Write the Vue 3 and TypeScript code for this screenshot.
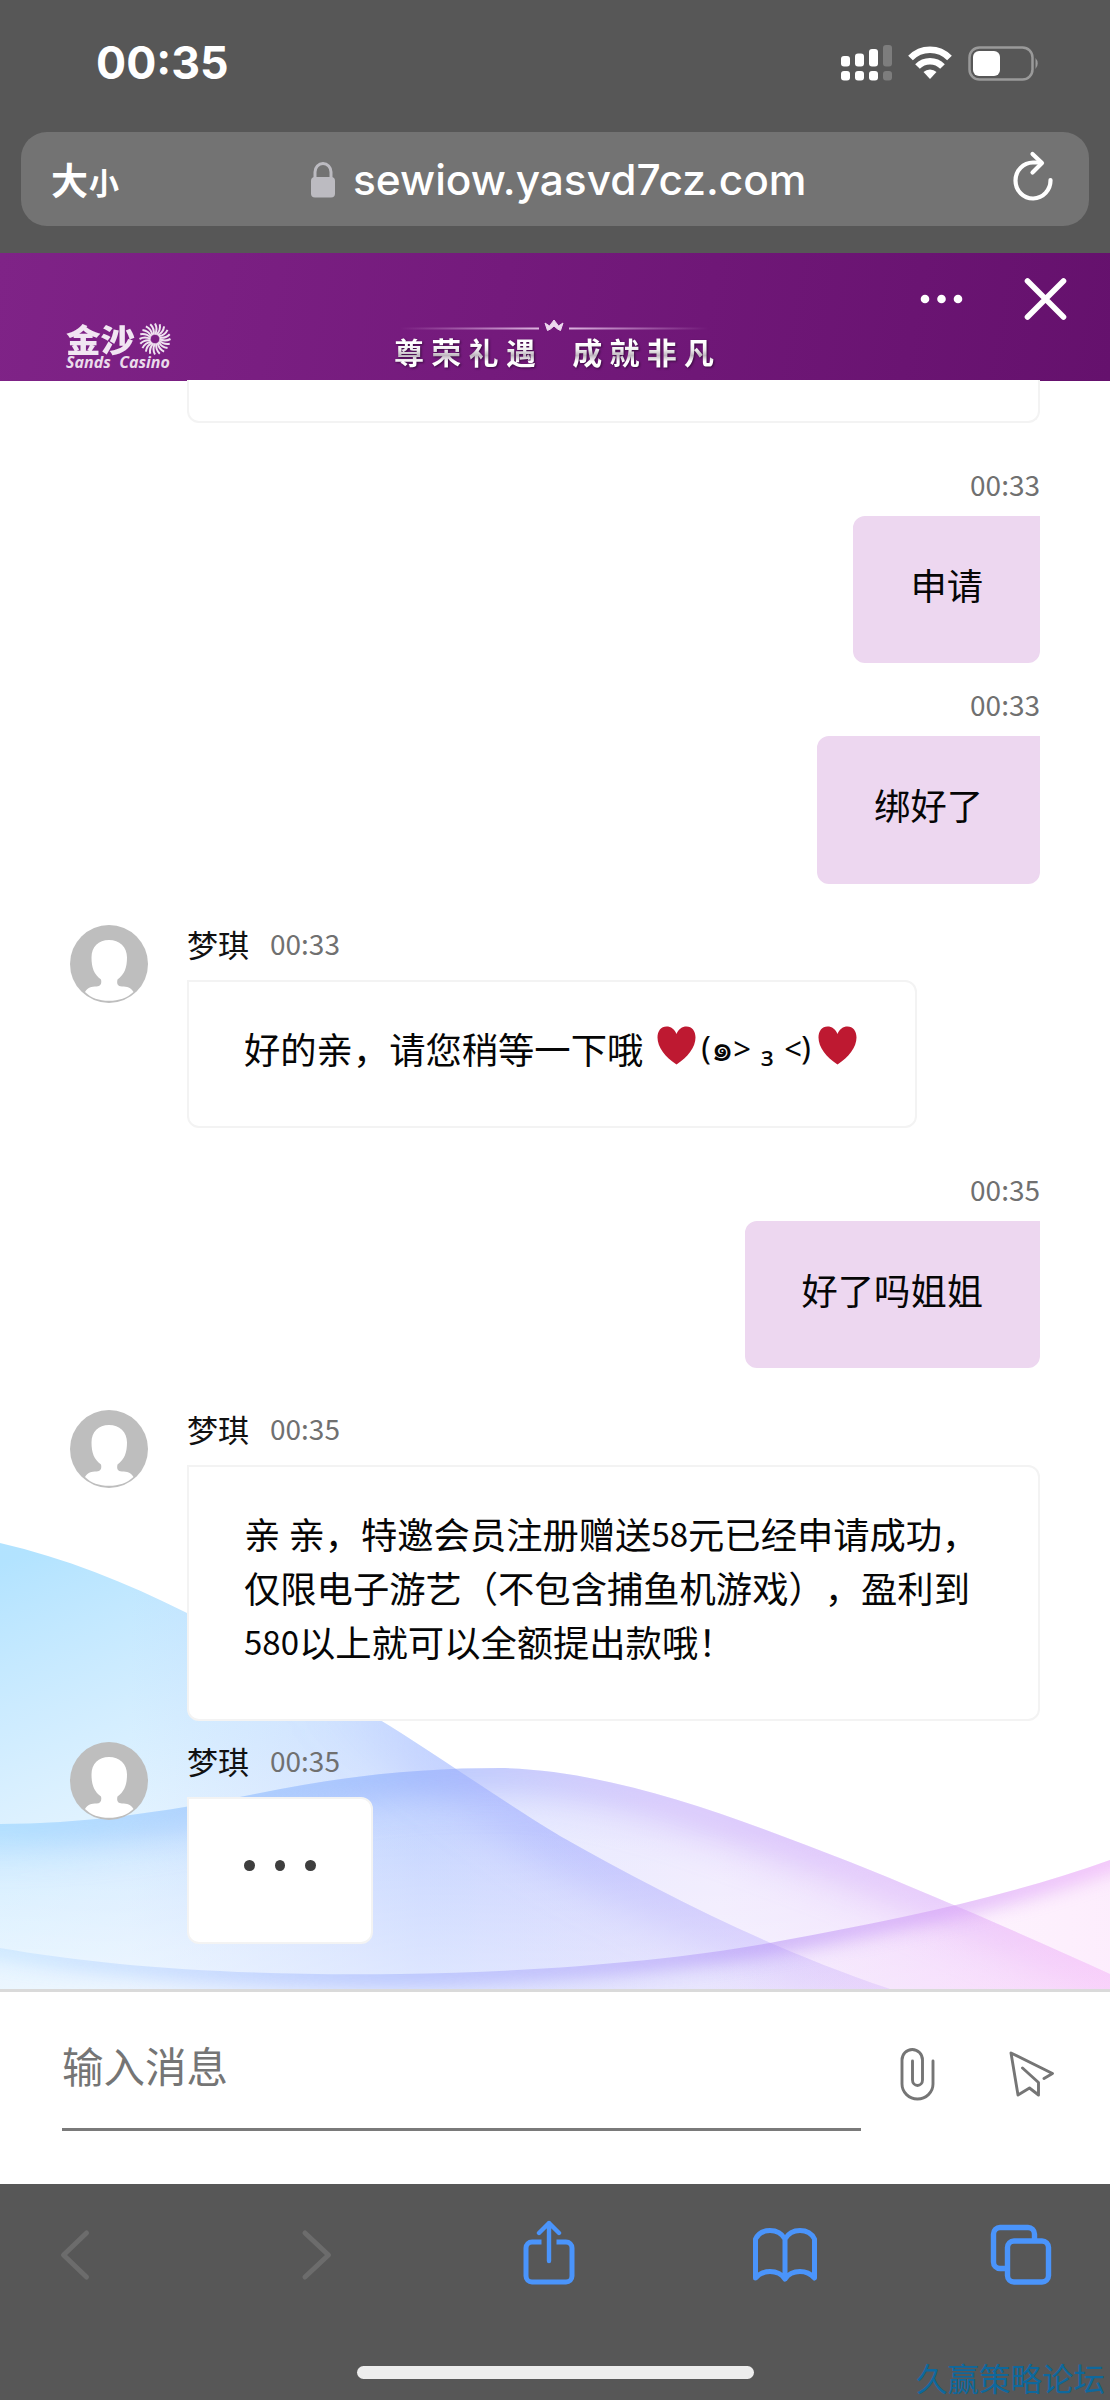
<script setup lang="ts">
interface Part {
  kind: 'text' | 'num' | 'heart' | 'face'
  value?: string
}

interface Message {
  from: 'me' | 'agent'
  time: string
  lines: Part[][]
  typing?: boolean
}

const agentName = '梦琪'

const t = (value: string): Part => ({ kind: 'text', value })
const n = (value: string): Part => ({ kind: 'num', value })

const messages: Message[] = [
  { from: 'me', time: '00:33', lines: [[t('申请')]] },
  { from: 'me', time: '00:33', lines: [[t('绑好了')]] },
  {
    from: 'agent',
    time: '00:33',
    lines: [[t('好的亲，请您稍等一下哦'), { kind: 'heart' }, { kind: 'face' }, { kind: 'heart' }]],
  },
  { from: 'me', time: '00:35', lines: [[t('好了吗姐姐')]] },
  {
    from: 'agent',
    time: '00:35',
    lines: [
      [t('亲 亲，特邀会员注册赠送'), n('58'), t('元已经申请成功，')],
      [t('仅限电子游艺（不包含捕鱼机游戏），盈利到')],
      [n('580'), t('以上就可以全额提出款哦！')],
    ],
  },
  { from: 'agent', time: '00:35', lines: [], typing: true },
]

const petals = Array.from({ length: 20 }, (_, i) => i * 18)
</script>

<template>
  <div class="phone">
    <header class="status">
      <span class="clock">00:35</span>
      <svg class="status-icons" width="200" height="40" viewBox="0 0 200 40">
        <g fill="#fff">
          <rect x="1" y="14" width="9" height="10.500" rx="3" />
          <rect x="15" y="11.500" width="9" height="13" rx="3" />
          <rect x="29" y="7" width="9" height="17.500" rx="3" />
          <rect x="1" y="29" width="9" height="9.500" rx="3" />
          <rect x="15" y="29" width="9" height="9.500" rx="3" />
          <rect x="29" y="29" width="9" height="9.500" rx="3" />
        </g>
        <g fill="#7d7d7d">
          <rect x="43" y="3" width="9" height="21.500" rx="3" />
          <rect x="43" y="29" width="9" height="9.500" rx="3" />
        </g>
        <g fill="none" stroke="#fff" stroke-width="6.500">
          <path d="M70.500 16a27 27 0 0 1 39 0" />
          <path d="M77.500 24.500a17.500 17.500 0 0 1 25 0" />
        </g>
        <path d="M90 37l-6.500-7a9.500 9.500 0 0 1 13 0z" fill="#fff" />
        <rect x="129.500" y="5.500" width="63" height="32" rx="10" fill="none" stroke="#9a9a9a" stroke-width="2.500" />
        <rect x="133" y="9" width="27" height="25" rx="6" fill="#fff" />
        <path d="M195.500 16a8 8 0 0 1 0 11z" fill="#9a9a9a" />
      </svg>
    </header>

    <div class="address">
      <div class="size"><span class="big">大</span><span class="small">小</span></div>
      <svg class="lock" width="26" height="38" viewBox="0 0 26 38">
        <rect x="1" y="16" width="24" height="20.500" rx="4" fill="#bcbbc1" />
        <path d="M5 18V11a8 8.500 0 0 1 16 0v7" fill="none" stroke="#bcbbc1" stroke-width="3" />
      </svg>
      <span class="url">sewiow.yasvd7cz.com</span>
      <svg class="reload" width="44" height="50" viewBox="0 0 44 50" fill="none" stroke="#fff" stroke-width="4.200" stroke-linecap="round" stroke-linejoin="round">
        <path d="M39.500 29A17.500 18 0 1 1 22 11.500h8" />
        <path d="M21.500 3L31 12l-9.500 9.500" />
      </svg>
    </div>

    <div class="banner">
      <div class="logo">
        <div class="logo-top">
          <span class="logo-cn">金沙</span>
          <svg width="32" height="34" viewBox="-16 -17 32 34" fill="none" stroke="#efe3f0" stroke-width="2">
            <path v-for="a in petals" :key="a" d="M0-4.500Q3-10 0-15.500" :transform="`rotate(${a})`" />
          </svg>
        </div>
        <span class="logo-en"><span class="logo-sands">Sands</span> Casino</span>
      </div>
      <div class="slogan">
        <svg width="324" height="20" viewBox="0 0 324 20">
          <defs>
            <linearGradient id="rule-l"><stop stop-color="#d9a5dd" stop-opacity="0" /><stop offset="1" stop-color="#dcb4df" /></linearGradient>
            <linearGradient id="rule-r"><stop stop-color="#dcb4df" /><stop offset="1" stop-color="#d9a5dd" stop-opacity="0" /></linearGradient>
          </defs>
          <rect x="6" y="12.500" width="139" height="2" fill="url(#rule-l)" />
          <rect x="175" y="12.500" width="139" height="2" fill="url(#rule-r)" />
          <path d="M153.500 15.500L151 8l4.500 3 4.500-6 4.500 6 4.500-3-2.500 7.500-3-1.500-3.500-3-3.500 3z" fill="#ecd9ee" stroke="#ecd9ee" stroke-width="1" stroke-linejoin="round" />
        </svg>
        <div class="slogan-text"><span>尊荣礼遇</span><span>成就非凡</span></div>
      </div>
      <svg class="actions" width="150" height="50" viewBox="0 0 150 50">
        <g fill="#fff"><circle cx="5" cy="24" r="4.300" /><circle cx="21.500" cy="24" r="4.300" /><circle cx="38" cy="24" r="4.300" /></g>
        <path d="M107.500 6l36 36m0-36l-36 36" stroke="#fff" stroke-width="5.600" stroke-linecap="round" />
      </svg>
    </div>

    <main class="chat">
      <svg class="waves" width="1110" height="489" viewBox="0 1500 1110 489" preserveAspectRatio="none">
        <defs>
          <linearGradient id="ga" gradientUnits="userSpaceOnUse" x1="60" y1="1540" x2="230" y2="1960">
            <stop stop-color="#9fdcff" stop-opacity=".8" /><stop offset=".35" stop-color="#b5e2ff" stop-opacity=".65" />
            <stop offset=".7" stop-color="#cdeaff" stop-opacity=".5" /><stop offset="1" stop-color="#e0efff" stop-opacity=".3" />
          </linearGradient>
          <linearGradient id="ga2" gradientUnits="userSpaceOnUse" x1="130" y1="0" x2="850" y2="0">
            <stop stop-color="#9fb4ff" stop-opacity="0" /><stop offset=".4" stop-color="#9fb0ff" stop-opacity=".32" />
            <stop offset="1" stop-color="#c4b0fb" stop-opacity=".35" />
          </linearGradient>
          <linearGradient id="gas" gradientUnits="userSpaceOnUse" x1="300" y1="0" x2="880" y2="0">
            <stop stop-color="#9fb4ff" stop-opacity="0" /><stop offset=".4" stop-color="#98a6ff" stop-opacity=".38" />
            <stop offset="1" stop-color="#c3a9fb" stop-opacity=".45" />
          </linearGradient>
          <linearGradient id="gb" gradientUnits="userSpaceOnUse" x1="0" y1="0" x2="1110" y2="0">
            <stop stop-color="#a9dcff" stop-opacity=".25" /><stop offset=".4" stop-color="#a3bcff" stop-opacity=".3" />
            <stop offset=".65" stop-color="#c9b4fb" stop-opacity=".28" /><stop offset="1" stop-color="#f0a2f8" stop-opacity=".5" />
          </linearGradient>
          <linearGradient id="gbs" gradientUnits="userSpaceOnUse" x1="0" y1="0" x2="1110" y2="0">
            <stop stop-color="#8fd0ff" /><stop offset=".35" stop-color="#84a5fb" />
            <stop offset=".6" stop-color="#bfa4fa" /><stop offset=".85" stop-color="#d4a6f8" /><stop offset="1" stop-color="#f3aef8" />
          </linearGradient>
          <linearGradient id="gcs" gradientUnits="userSpaceOnUse" x1="0" y1="0" x2="1110" y2="0">
            <stop stop-color="#a8d4ff" stop-opacity=".6" /><stop offset=".35" stop-color="#a3b2fd" />
            <stop offset=".7" stop-color="#b592f6" /><stop offset="1" stop-color="#eaa8f8" />
          </linearGradient>
          <linearGradient id="gfade" gradientUnits="userSpaceOnUse" x1="0" y1="1830" x2="0" y2="1989">
            <stop stop-color="#fff" stop-opacity="0" /><stop offset="1" stop-color="#fff" stop-opacity=".4" />
          </linearGradient>
          <linearGradient id="gpink" gradientUnits="userSpaceOnUse" x1="700" y1="0" x2="1110" y2="0">
            <stop stop-color="#f6b8f6" stop-opacity="0" /><stop offset="1" stop-color="#f6b8f6" stop-opacity=".25" />
          </linearGradient>
          <clipPath id="ca"><path d="M0 1543C65 1558 125 1582 187 1613C260 1648 320 1686 380 1720C430 1750 500 1800 560 1836C660 1892 760 1945 890 1989H0z" /></clipPath>
          <clipPath id="cb"><path d="M0 1824C80 1824 160 1813 255 1794C350 1774 430 1768 500 1768C610 1770 730 1815 850 1862C930 1894 1020 1933 1110 1974V1989H0z" /></clipPath>
          <clipPath id="cc"><path d="M0 1948C110 1967 240 1976 400 1974C540 1972 680 1960 780 1941C900 1919 1010 1896 1110 1860V1989H0z" /></clipPath>
          <filter id="soft" x="-20%" y="-50%" width="140%" height="200%"><feGaussianBlur stdDeviation="18" /></filter>
          <filter id="soft-s" x="-20%" y="-80%" width="140%" height="260%"><feGaussianBlur stdDeviation="9" /></filter>
        </defs>
        <g clip-path="url(#ca)">
          <rect y="1500" width="1110" height="489" fill="url(#ga)" />
          <rect y="1500" width="1110" height="489" fill="url(#ga2)" />
          <path d="M187 1613C260 1648 320 1686 380 1720C430 1750 500 1800 560 1836C660 1892 760 1945 890 1989L950 2010" fill="none" stroke="url(#gas)" stroke-width="70" filter="url(#soft)" />
        </g>
        <g clip-path="url(#cb)">
          <rect y="1700" width="1110" height="289" fill="url(#gb)" />
          <path d="M-60 1824H0C80 1824 160 1813 255 1794C350 1774 430 1768 500 1768C610 1770 730 1815 850 1862C930 1894 1020 1933 1110 1974L1170 2001" fill="none" stroke="url(#gbs)" stroke-width="50" opacity=".5" filter="url(#soft)" />
        </g>
        <rect y="1830" width="1110" height="159" fill="url(#gfade)" />
        <g clip-path="url(#cc)">
          <rect x="600" y="1850" width="510" height="139" fill="url(#gpink)" />
          <path d="M-60 1938L0 1948C110 1967 240 1976 400 1974C540 1972 680 1960 780 1941C900 1919 1010 1896 1110 1860L1170 1840" fill="none" stroke="url(#gcs)" stroke-width="24" opacity=".6" filter="url(#soft-s)" />
        </g>
      </svg>

      <div class="messages">
        <div class="stub"></div>
        <div v-for="(m, i) in messages" :key="i" class="row" :class="m.from">
          <svg v-if="m.from === 'agent'" class="avatar" width="78" height="78" viewBox="0 0 78 78">
            <circle cx="39" cy="39" r="39" fill="#bebebe" />
            <path
              d="M39 15c-10.500 0-17.500 7-17.500 17.500 0 10 2.500 17 9.500 22 1 4-.5 7-4.500 7-5 0-9 1-11.500 5.500C21 73 29 75.800 39 75.800S57 73 63.500 67C61 62.500 57 61.500 52 61.500c-4.500 0-5.500-3-4.500-7 7-5 9.500-12 9.500-22C57 22 49.500 15 39 15z"
              fill="#fff"
            />
          </svg>
          <div class="body">
            <div class="meta">
              <span v-if="m.from === 'agent'" class="name">{{ agentName }}</span>
              <span class="time">{{ m.time }}</span>
            </div>
            <div class="bubble" :class="{ typing: m.typing }">
              <template v-if="m.typing"><i></i><i></i><i></i></template>
              <div v-for="(line, j) in m.lines" :key="j" class="line">
                <template v-for="(p, k) in line" :key="k">
                  <svg v-if="p.kind === 'heart'" class="heart" width="39" height="39" viewBox="0 0 39 39">
                    <path d="M19.500 8C17.500 3 14 .5 9.500.5 4 .5.5 5 .5 11.500.5 21 8 31 19.500 38.500 31 31 38.500 21 38.500 11.500 38.500 5 35 .5 29.500.5 25 .5 21.500 3 19.500 8z" fill="#be1931" />
                  </svg>
                  <span v-else-if="p.kind === 'face'" class="face"><span class="paren">(</span><span class="thai">๑</span><span class="eye">&gt;</span><span class="sub">₃</span><span class="eye">&lt;</span><span class="paren">)</span></span>
                  <span v-else :class="p.kind">{{ p.value }}</span>
                </template>
              </div>
            </div>
          </div>
        </div>
      </div>
    </main>

    <div class="composer">
      <div class="field">输入消息</div>
      <svg class="clip" width="36" height="54" viewBox="0 0 36 54" fill="none" stroke="#757575" stroke-width="2.900" stroke-linecap="round">
        <path d="M33 14v23a15.500 15 0 0 1-31 0V13a10.200 10.500 0 0 1 20.500 0v20a5 5.500 0 0 1-10 0V14" />
      </svg>
      <svg class="send" width="48" height="50" viewBox="0 0 48 50" fill="none" stroke="#757575" stroke-width="2.900" stroke-linecap="round" stroke-linejoin="round">
        <path d="M36 28.500l8.500-5L3 3l7 42 11.500-7 9 7V32.500L14.500 18" />
      </svg>
    </div>

    <footer class="toolbar">
      <div class="tools">
        <svg class="back" width="34" height="54" viewBox="0 0 34 54" fill="none" stroke="#6c6c6c" stroke-width="5" stroke-linecap="round" stroke-linejoin="round"><path d="M28.500 5L5.500 27l23 22" /></svg>
        <svg class="forward" width="34" height="54" viewBox="0 0 34 54" fill="none" stroke="#6c6c6c" stroke-width="5" stroke-linecap="round" stroke-linejoin="round"><path d="M5 5l23.500 22L5 49" /></svg>
        <svg class="share" width="54" height="66" viewBox="0 0 54 66" fill="none" stroke="#4a94fb" stroke-width="5" stroke-linecap="round" stroke-linejoin="round">
          <path d="M19.500 22H10a6 6 0 0 0-6 6v28a6 6 0 0 0 6 6h34a6 6 0 0 0 6-6V28a6 6 0 0 0-6-6h-9.500" stroke-linecap="butt" />
          <path d="M27 41V3M17 13L27 3l10 10" stroke-width="4.400" />
        </svg>
        <svg class="book" width="66" height="56" viewBox="0 0 66 56" fill="none" stroke="#4a94fb" stroke-width="5" stroke-linejoin="round">
          <path d="M33 12C29 5 23 3.500 18 3.500S7 5 3.500 12v39C8 46 13 44.500 18 44.500S29 46 33 52c4-6 10-7.500 15-7.500S58 46 62.500 51V12C59 5 53 3.500 48 3.500S37 5 33 12zV51" />
        </svg>
        <svg class="tabs" width="64" height="64" viewBox="0 0 64 64" fill="none" stroke="#4a94fb" stroke-width="5.400">
          <path d="M45.500 18V11a6.500 6.500 0 0 0-6.500-6.500H11A6.500 6.500 0 0 0 4.500 11v28a6.500 6.500 0 0 0 6.500 6.500h7" />
          <rect x="18.500" y="18" width="41" height="41" rx="6.500" />
        </svg>
      </div>
      <div class="home"></div>
      <span class="mark">久赢策略论坛</span>
    </footer>
  </div>
</template>

<style>
body {
  background: #fff;
}
</style>

<style scoped>
.phone {
  width: 1110px;
  height: 2400px;
  display: flex;
  flex-direction: column;
  background: #575757;
  font-family: "Noto Sans CJK SC", sans-serif;
  text-spacing-trim: space-all;
  overflow: hidden;
}
svg {
  display: block;
  flex: none;
}
.status {
  height: 132px;
  box-sizing: border-box;
  padding: 42px 70px 0 96px;
  display: flex;
  justify-content: space-between;
}
.clock {
  font: 700 44.700px/43px Inter, sans-serif;
  color: #fff;
}
.address {
  height: 94px;
  margin: 0 21px 27px;
  border-radius: 26px;
  background: #737373;
  display: flex;
  color: #fff;
}
.size {
  width: 289px;
  padding-left: 30px;
  box-sizing: border-box;
  display: flex;
  font-weight: 700;
  line-height: 94px;
}
.big {
  width: 38px;
  font-size: 37px;
}
.small {
  font-size: 30px;
  line-height: 98px;
}
.lock {
  margin-top: 29px;
}
.url {
  width: 640px;
  padding-left: 17px;
  font: 500 42.400px/95px Inter, sans-serif;
}
.reload {
  margin: 19px 0 0 18px;
}
.banner {
  height: 128px;
  background: linear-gradient(100deg, #7f2387 0%, #741a7c 45%, #65116d 100%);
  display: flex;
}
.logo {
  width: 328px;
  padding: 69px 0 0 66px;
}
.logo-top {
  display: flex;
  height: 33px;
}
.logo-cn {
  width: 67px;
  margin-right: 6px;
  font-size: 32px;
  font-weight: 900;
  line-height: 33px;
  color: #f1e6f2;
  transform: scaleX(1.08);
  transform-origin: left;
}
.logo-en {
  display: block;
  font: italic 700 16px/15px "Open Sans", sans-serif;
  color: #eadbeb;
  white-space: nowrap;
}
.logo-sands {
  display: inline-block;
  width: 49px;
}
.slogan {
  width: 324px;
  padding-top: 62px;
}
.slogan-text {
  display: flex;
  gap: 29px;
  font-size: 30px;
  font-weight: 700;
  line-height: 33px;
  letter-spacing: 7.300px;
  white-space: nowrap;
}
.slogan-text span {
  color: transparent;
  background: linear-gradient(#fff 25%, #eee 45%, #bfb6bf 62%, #fff 80%);
  background-clip: text;
  filter: drop-shadow(1px 1px 1px #3a0a40);
}
.actions {
  margin: 22px 0 0 202px;
}
.chat {
  position: relative;
  height: 1608px;
  background: #fff;
}
.waves {
  position: absolute;
  left: 0;
  bottom: 0;
}
.messages {
  position: relative;
  padding: 0 70px;
  display: flex;
  flex-direction: column;
}
.stub {
  box-sizing: border-box;
  height: 43px;
  margin: -1px 0 41px 117px;
  border: 2px solid #f3f3f3;
  border-top: 0;
  border-radius: 0 0 12px 12px;
  background: #fff;
}
.row {
  display: flex;
}
.row.me {
  justify-content: flex-end;
}
.me + .me {
  margin-top: 21px;
}
.me + .agent {
  margin-top: 38.500px;
}
.agent + .me {
  margin-top: 41px;
}
.agent + .agent {
  margin-top: 18px;
}
.avatar {
  margin: 3px 39px 0 0;
}
.meta {
  display: flex;
  height: 42px;
  line-height: 43px;
  margin-bottom: 16px;
}
.me .meta {
  justify-content: flex-end;
  height: 40px;
  line-height: 40px;
  margin-bottom: 12px;
}
.name {
  width: 83px;
  font-size: 31px;
  color: #111;
}
.time {
  font-size: 28px;
  color: #707070;
}
.bubble {
  box-sizing: border-box;
  width: fit-content;
  padding: 39px 55px 50px;
  border: 2px solid #f3f3f3;
  border-radius: 0 12px 12px 12px;
  background: #fff;
  color: #060606;
  font-size: 36.300px;
}
.me .bubble {
  border-color: #edd7f0;
  border-radius: 12px 0 12px 12px;
  background: #edd7f0;
}
.line {
  height: 54.400px;
  line-height: 54.400px;
  display: flex;
  white-space: pre;
}
.row:nth-child(6) .bubble {
  width: 853px;
}
.num {
  font-size: 33px;
}
.heart {
  margin: 5px 0 0 14px;
}
.face {
  display: flex;
  width: 110px;
  margin-left: 5px;
  font-family: "Noto Sans", sans-serif;
}
.face + .heart {
  margin: 5px 3px 0 7px;
}
.paren {
  width: 10px;
  font-size: 32px;
}
.thai {
  width: 22px;
  font-size: 36px;
}
.eye {
  width: 17px;
  font-size: 31px;
}
.sub {
  width: 34px;
  text-align: center;
  font-size: 36px;
}
.bubble.typing {
  width: 186px;
  height: 147px;
  padding: 61px 55px 0;
  display: flex;
  gap: 20px;
}
.typing i {
  width: 11px;
  height: 11px;
  border-radius: 50%;
  background: #3e3e3e;
}
.composer {
  height: 195px;
  box-sizing: border-box;
  border-top: 3px solid #dadada;
  background: #fff;
  display: flex;
}
.field {
  width: 799px;
  height: 139px;
  box-sizing: border-box;
  margin-left: 62px;
  border-bottom: 3px solid #7a7a7a;
  font-size: 41.500px;
  line-height: 146px;
  color: #757575;
}
.clip {
  margin: 55px 0 0 39px;
}
.send {
  margin: 58px 0 0 72px;
}
.toolbar {
  position: relative;
  flex: 1;
}
.tools {
  display: flex;
  align-items: center;
  height: 60px;
  padding: 41px 0 0 58px;
}
.forward {
  margin-left: 208px;
}
.share {
  margin: -4px 0 0 188px;
}
.book {
  margin-left: 176px;
}
.tabs {
  margin-left: 171px;
}
.home {
  width: 397px;
  height: 13px;
  margin: 81px 0 0 357px;
  border-radius: 7px;
  background: #ededed;
}
.mark {
  position: absolute;
  right: 5px;
  bottom: 5px;
  font-family: KaiTi, "Noto Sans CJK SC", sans-serif;
  font-size: 31.500px;
  line-height: 36px;
  color: #0e689d;
}
</style>
